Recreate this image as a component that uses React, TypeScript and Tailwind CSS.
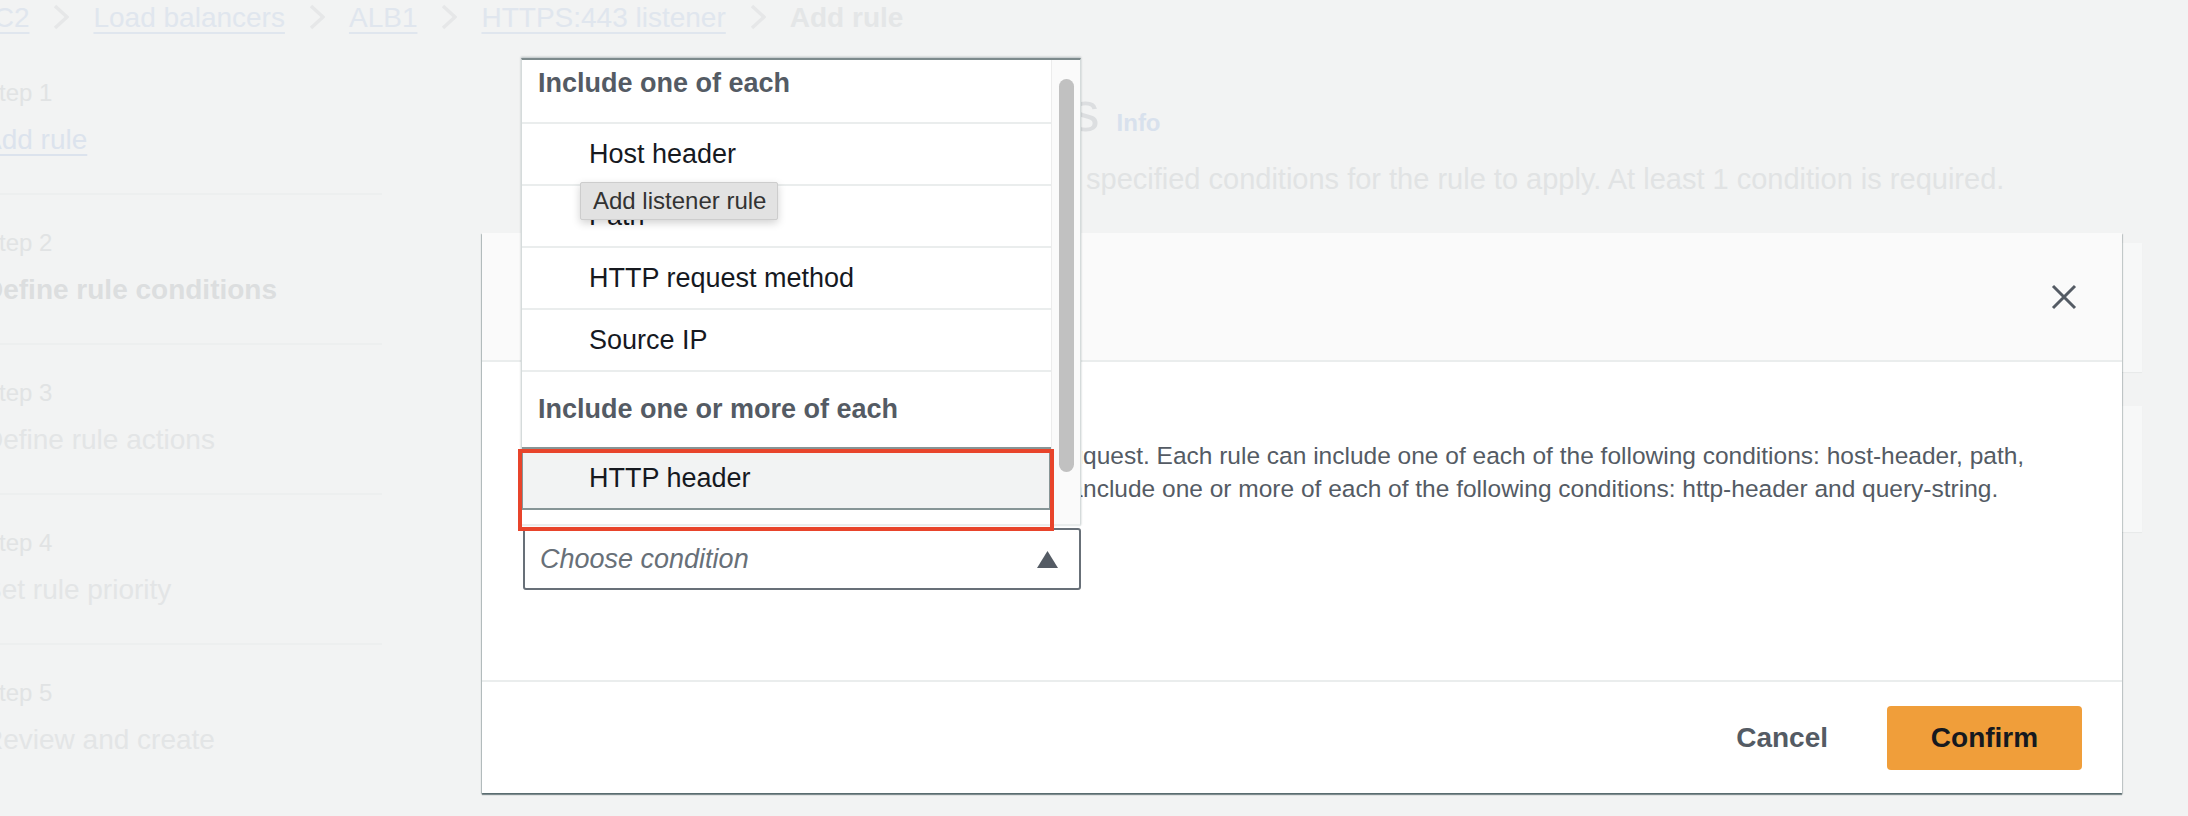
import * as React from "react";

const crumbs = ["EC2", "Load balancers", "ALB1", "HTTPS:443 listener"];

const steps = [
  { label: "Step 1", title: "Add rule", kind: "link" },
  { label: "Step 2", title: "Define rule conditions", kind: "current" },
  { label: "Step 3", title: "Define rule actions", kind: "plain" },
  { label: "Step 4", title: "Set rule priority", kind: "plain" },
  { label: "Step 5", title: "Review and create", kind: "plain" },
];

const singleConditions = ["Host header", "Path", "HTTP request method", "Source IP"];

function Chevron() {
  return (
    <svg width="16" height="26" viewBox="0 0 16 26" className="shrink-0">
      <polyline
        points="2,2 14,13 2,24"
        fill="none"
        stroke="#e6e7e8"
        strokeWidth="3.5"
      />
    </svg>
  );
}

const App = () => {
  return (
    <div className="relative h-[816px] w-[2188px] overflow-hidden bg-[#f2f3f3] font-['Liberation_Sans',Arial,sans-serif]">
      {/* breadcrumbs */}
      <div className="-ml-[25px] flex h-[40px] items-start gap-[24px] text-[28px] leading-[36px]">
        {crumbs.map((c) => (
          <React.Fragment key={c}>
            <span className="whitespace-nowrap text-[#e0e6ee] underline decoration-2 underline-offset-[5px]">
              {c}
            </span>
            <div className="pt-[4px]">
              <Chevron />
            </div>
          </React.Fragment>
        ))}
        <span className="whitespace-nowrap font-bold text-[#e4e6e7]">Add rule</span>
      </div>

      <div className="flex">
        {/* wizard steps */}
        <aside className="-ml-[17px] mt-[5px] w-[399px] shrink-0">
          {steps.map((s, i) => (
            <div
              key={s.label}
              className={
                i < steps.length - 1
                  ? "h-[150px] border-b-2 border-[#edefef] pt-[32px]"
                  : "h-[150px] pt-[32px]"
              }
            >
              <div className="text-[24px] leading-[32px] text-[#e1e3e4]">{s.label}</div>
              {s.kind === "link" && (
                <div className="mt-[11px] text-[28px] leading-[40px] text-[#dce3ed]">
                  <span className="underline decoration-2 underline-offset-[5px]">{s.title}</span>
                </div>
              )}
              {s.kind === "current" && (
                <div className="mt-[11px] text-[28px] font-bold leading-[40px] text-[#dcdedf]">
                  {s.title}
                </div>
              )}
              {s.kind === "plain" && (
                <div className="mt-[11px] text-[28px] leading-[40px] text-[#e3e5e6]">{s.title}</div>
              )}
            </div>
          ))}
        </aside>

        {/* page content behind the modal */}
        <main className="ml-[179px] mr-[46px] flex-1 pt-[40px]">
          <div className="flex items-baseline">
            <h1 className="whitespace-nowrap text-[56px] leading-[64px] text-[#dcdee0]">
              Define rule conditions
            </h1>
            <span className="ml-[17px] text-[24px] font-bold text-[#d8e1ed]">Info</span>
          </div>
          <div className="mt-[15px] flex whitespace-nowrap text-[29px] leading-[40px] text-[#e1e3e4]">
            <span className="w-[525px] shrink-0 overflow-hidden">Requests must match all the</span>
            <span>specified conditions for the rule to apply. At least 1 condition is required.</span>
          </div>
          <div className="mt-[44px] h-[129px] bg-[#f7f8f8] shadow-[0_1px_1px_rgba(0,28,36,0.04)]" />
          <div className="mt-[34px] h-[126px] bg-[#f7f8f8] shadow-[0_1px_1px_rgba(0,28,36,0.04)]" />
        </main>
      </div>

      {/* modal */}
      <div className="absolute left-[482px] top-[233px] flex h-[560px] w-[1640px] flex-col bg-white shadow-[0_2px_1px_0_rgba(0,28,36,0.45),1px_1px_1px_0_rgba(0,28,36,0.15),-1px_1px_1px_0_rgba(0,28,36,0.2)]">
        <div className="flex h-[129px] shrink-0 items-center justify-between border-b-2 border-[#eaeded] bg-[#fafafa] pl-[40px] pr-[45px]">
          <span className="text-[36px] font-bold text-[#16191f]">Add condition</span>
          <svg width="26" height="26" viewBox="0 0 26 26">
            <path d="M2 2 L24 24 M24 2 L2 24" stroke="#545b64" strokeWidth="3" fill="none" />
          </svg>
        </div>
        <div className="flex-1 pl-[41px] pt-[77px]">
          <div className="whitespace-nowrap text-[24.5px] leading-[33px] text-[#545b64]">
            <div className="flex">
              <span className="w-[560px] shrink-0 overflow-hidden">
                Choose the condition type that the rule evaluates for each incoming re
              </span>
              <span>quest. Each rule can include one of each of the following conditions: host-header, path,</span>
            </div>
            <div className="flex">
              <span className="w-[560px] shrink-0 overflow-hidden">
                http-request-method and source-ip. Each rule can also i
              </span>
              <span>nclude one or more of each of the following conditions: http-header and query-string.</span>
            </div>
          </div>
          <div className="mt-[23px] flex h-[62px] w-[558px] items-center justify-between rounded-[3px] border-2 border-[#687078] pl-[15px] pr-[21px]">
            <span className="text-[27px] italic text-[#687078]">Choose condition</span>
            <svg width="21" height="17" viewBox="0 0 21 17">
              <polygon points="0,17 10.5,0 21,17" fill="#545b64" />
            </svg>
          </div>
        </div>
        <div className="flex h-[113px] shrink-0 items-center justify-end gap-[59px] border-t-2 border-[#eaeded] pr-[40px]">
          <span className="text-[28px] font-bold text-[#545b64]">Cancel</span>
          <button className="h-[64px] w-[195px] rounded-[4px] bg-[#f09e3a] text-[28px] font-bold text-[#16191f]">
            Confirm
          </button>
        </div>
      </div>

      {/* condition dropdown, opened upward */}
      <div className="absolute left-[521px] top-[58px] flex h-[468px] w-[560px] overflow-hidden border-x border-t-2 border-b-2 border-x-[#d5dbdb] border-t-[#7d8a8c] border-b-[#eaeded] bg-white shadow-[0_-1px_2px_rgba(0,28,36,0.25)]">
        <div className="flex-1 overflow-hidden text-[27px]">
          <div className="h-[62px] pl-[16px] pt-[5px] font-bold leading-[36px] text-[#545b64]">
            Include one of each
          </div>
          {singleConditions.map((c) => (
            <div
              key={c}
              className="flex h-[62px] items-center border-t-2 border-[#eaeded] pl-[67px] text-[#16191f]"
            >
              {c}
            </div>
          ))}
          <div className="flex h-[77px] items-center border-t-2 border-[#eaeded] pl-[16px] font-bold text-[#545b64]">
            Include one or more of each
          </div>
          <div className="-ml-[1px] flex h-[63px] items-center border-2 border-[#879596] bg-[#f2f3f3] pl-[66px] text-[#16191f]">
            HTTP header
          </div>
          <div className="flex h-[62px] items-center pl-[67px] text-[#16191f]">Query string</div>
        </div>
        <div className="w-[29px] shrink-0 border-l border-[#ececec] bg-[#fafafa] pl-[7px] pt-[19px]">
          <div className="h-[393px] w-[15px] rounded-full bg-[#c1c1c1]" />
        </div>
      </div>

      {/* native tooltip */}
      <div className="absolute left-[580px] top-[182px] flex h-[38px] w-[198px] items-center rounded-[2px] border border-[#cdcdcd] bg-[#e2e2e2] pl-[12px] text-[24px] text-[#333333] shadow-[0_3px_8px_rgba(0,0,0,0.18)]">
        Add listener rule
      </div>

      {/* red highlight annotation */}
      <div className="absolute left-[518px] top-[449px] h-[82px] w-[536px] border-4 border-[#e8442b]" />
    </div>
  );
};

export default App;
